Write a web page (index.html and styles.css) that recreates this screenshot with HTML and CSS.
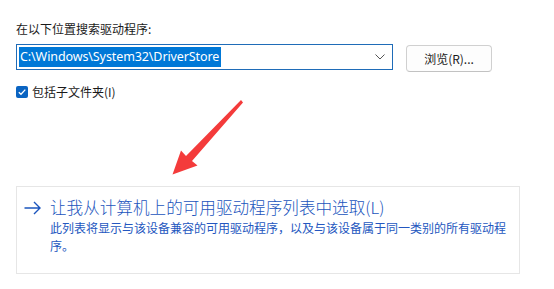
FILE: index.html
```html
<!DOCTYPE html>
<html lang="zh-CN">
<head>
<meta charset="utf-8">
<title>浏览计算机上的驱动程序</title>
<link rel="stylesheet" href="styles.css">
</head>
<body>
<div class="page">
  <div class="label">在以下位置搜索驱动程序:</div>
  <div class="path-row">
    <div class="combo">
      <span class="combo-text">C:\Windows\System32\DriverStore</span>
      <svg class="chev" width="10" height="6" viewBox="0 0 10 6"><path d="M0.5 0.5 L5 5 L9.5 0.5" fill="none" stroke="#555" stroke-width="1"/></svg>
    </div>
    <button class="browse">浏览(R)...</button>
  </div>
  <div class="check-row">
    <span class="checkbox"><svg width="12" height="12" viewBox="0 0 12 12"><path d="M2.8 6.2 L5 8.3 L9.3 3.6" fill="none" stroke="#fff" stroke-width="1.3"/></svg></span>
    <span class="check-label">包括子文件夹(I)</span>
  </div>
  <div class="card">
    <div class="card-head">
      <svg class="card-arrow" width="17" height="14" viewBox="0 0 17 14"><path d="M0.5 7 H16 M10 1 L16 7 L10 13" fill="none" stroke="#1b55bd" stroke-width="1.4"/></svg>
      <div class="card-body">
        <div class="card-title">让我从计算机上的可用驱动程序列表中选取(L)</div>
        <div class="card-desc">此列表将显示与该设备兼容的可用驱动程序，以及与该设备属于同一类别的所有驱动程序。</div>
      </div>
    </div>
  </div>
  <svg class="red-arrow" width="554" height="289" viewBox="0 0 554 289">
    <polygon points="241,100 243,102.5 192,161 197.5,165.5 172.5,174.5 181,150.5 186,156" fill="#f43b3b"/>
  </svg>
</div>
</body>
</html>
```

FILE: styles.css
```css
html, body {
  margin: 0;
  padding: 0;
  background: #ffffff;
}
.page {
  position: relative;
  width: 554px;
  height: 289px;
  overflow: hidden;
  padding: 21px 0 0 16px;
  box-sizing: border-box;
  font-family: "Noto Sans CJK SC", "Noto Sans", sans-serif;
  color: #1a1a1a;
}
.label {
  font-size: 12px;
  line-height: 16px;
  height: 16px;
}
.path-row {
  display: flex;
  align-items: flex-start;
  margin-top: 7px;
}
.combo {
  width: 377px;
  height: 26px;
  box-sizing: border-box;
  border: 1px solid #1f6cb8;
  display: flex;
  align-items: center;
  padding: 0 7px 0 2px;
  justify-content: space-between;
}
.combo-text {
  background: #0078d7;
  color: #fff;
  font-family: "Noto Sans", sans-serif;
  font-size: 12.5px;
  line-height: 20px;
  padding: 0 2px 0 1px;
  letter-spacing: -0.1px;
}
.chev {
  display: block;
}
.browse {
  margin-left: 13px;
  margin-top: 1px;
  width: 86px;
  height: 27px;
  box-sizing: border-box;
  border: 1px solid #d0d0d0;
  border-bottom-color: #c2c2c2;
  border-radius: 4px;
  background: #fdfdfd;
  font-family: "Noto Sans CJK SC", "Noto Sans", sans-serif;
  font-size: 12px;
  color: #1a1a1a;
  padding: 0;
}
.check-row {
  display: flex;
  align-items: center;
  margin-top: 12px;
  height: 16px;
}
.checkbox {
  width: 12px;
  height: 12px;
  border-radius: 2px;
  background: #0a64c2;
  display: flex;
}
.check-label {
  margin-left: 4px;
  font-size: 12px;
  line-height: 16px;
}
.card {
  margin-top: 86px;
  width: 504px;
  height: 88px;
  box-sizing: border-box;
  border: 1px solid #e6e6e6;
  padding: 8px 0 0 7px;
}
.card-head {
  display: flex;
  align-items: flex-start;
}
.card-arrow {
  display: block;
  margin-top: 6px;
  flex: none;
}
.card-body {
  width: 460px;
  margin-left: 9px;
}
.card-title {
  color: #1b55bd;
  font-size: 16.6px;
  line-height: 24px;
  font-weight: 300;
}
.card-desc {
  color: #2457c0;
  font-size: 12px;
  line-height: 18px;
}
.red-arrow {
  position: absolute;
  left: 0;
  top: 0;
  pointer-events: none;
}
```
